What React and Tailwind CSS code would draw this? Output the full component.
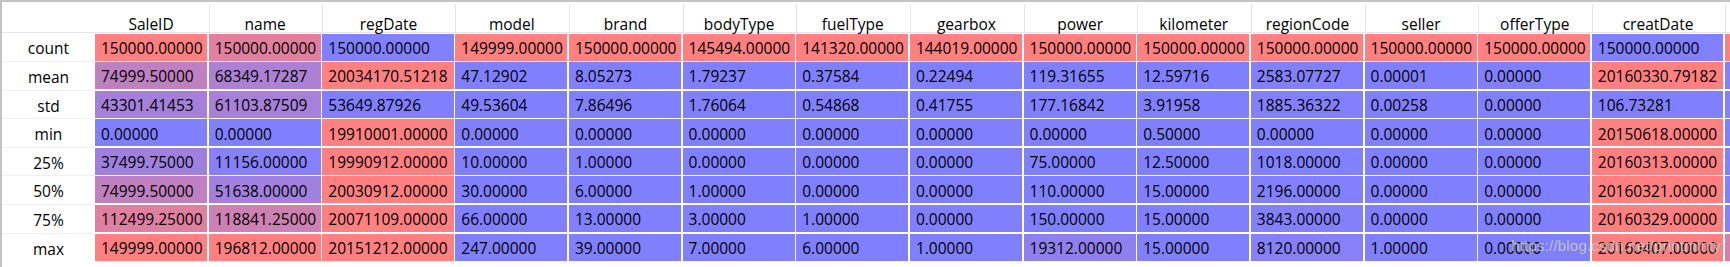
import React from 'react';

const columns = [
  'SaleID', 'name', 'regDate', 'model', 'brand', 'bodyType', 'fuelType', 'gearbox',
  'power', 'kilometer', 'regionCode', 'seller', 'offerType', 'creatDate', 'price',
];

const wide = ['regDate', 'creatDate', 'price'];

const stats = [
  ['count', [150000, 150000, 150000, 149999, 150000, 145494, 141320, 144019, 150000, 150000, 150000, 150000, 150000, 150000, 150000]],
  ['mean', [74999.5, 68349.17287, 20034170.51218, 47.12902, 8.05273, 1.79237, 0.37584, 0.22494, 119.31655, 12.59716, 2583.07727, 0.00001, 0, 20160330.79182, 5923.32733]],
  ['std', [43301.41453, 61103.87509, 53649.87926, 49.53604, 7.86496, 1.76064, 0.54868, 0.41755, 177.16842, 3.91958, 1885.36322, 0.00258, 0, 106.73281, 7501.99847]],
  ['min', [0, 0, 19910001, 0, 0, 0, 0, 0, 0, 0.5, 0, 0, 0, 20150618, 11]],
  ['25%', [37499.75, 11156, 19990912, 10, 1, 0, 0, 0, 75, 12.5, 1018, 0, 0, 20160313, 1300]],
  ['50%', [74999.5, 51638, 20030912, 30, 6, 1, 0, 0, 110, 15, 2196, 0, 0, 20160321, 3250]],
  ['75%', [112499.25, 118841.25, 20071109, 66, 13, 3, 1, 0, 150, 15, 3843, 0, 0, 20160329, 7700]],
  ['max', [149999, 196812, 20151212, 247, 39, 7, 6, 1, 19312, 15, 8120, 1, 0, 20160407, 99999]],
];

// per-column gradient from blue (low) to red (high)
const cellColor = (col, value) => {
  const vals = stats.map((s) => s[1][col]);
  const lo = Math.min(...vals);
  const hi = Math.max(...vals);
  const t = hi === lo ? 0 : (value - lo) / (hi - lo);
  const r = Math.round(128 + 127 * t);
  const b = Math.round(255 - 127 * t);
  return `rgb(${r},128,${b})`;
};

function Cell({ name, children, className, style }) {
  const w = wide.includes(name) ? 'w-[131.4px]' : 'w-[112.1px]';
  return (
    <div className={`${w} shrink-0 ${className}`} style={style}>
      {children}
    </div>
  );
}

export default function App() {
  return (
    <div
      className="relative w-[1730px] h-[267px] overflow-hidden bg-white border-t-2 border-l-2 border-[#c3c3c3] text-black"
      style={{ fontFamily: '"Open Sans", "Noto Sans", sans-serif' }}
    >
      {/* header */}
      <div className="flex h-[31px] border-b border-[#e6e6e6]">
        <div className="w-[93px] shrink-0" />
        <div className="flex gap-[1.57px]">
          {columns.map((c, i) => (
            <Cell
              key={c}
              name={c}
              className={`h-[29px] mt-[2px] flex items-end justify-center text-[15.5px] leading-none ${i > 0 ? 'border-l border-[#e4e4e4]' : ''}`}
            >
              <span className="pb-[1px]">{c}</span>
            </Cell>
          ))}
        </div>
      </div>

      {/* body */}
      <div className="flex flex-col gap-[1.6px] pt-[0.5px]">
        {stats.map(([label, values], r) => (
          <div key={label} className="flex h-[27px]">
            <div
              className={`w-[93px] shrink-0 flex items-center justify-center text-[15.5px] pt-[3px] ${r > 0 ? 'border-t border-[#f0f0f0] -mt-[1px] h-[29px]' : ''}`}
            >
              {label}
            </div>
            <div className="flex gap-[1.57px]">
              {values.map((v, i) => (
                <Cell
                  key={columns[i]}
                  name={columns[i]}
                  className="h-[27px] flex items-center pl-[6px] pt-[3px] text-[15.5px] whitespace-nowrap overflow-hidden"
                  style={{ backgroundColor: cellColor(i, v) }}
                >
                  {v.toFixed(5)}
                </Cell>
              ))}
            </div>
          </div>
        ))}
      </div>

      <div
        className="absolute right-[9px] bottom-[10px] text-[15px] text-white/60 tracking-[0.2px]"
        style={{ fontFamily: '"Liberation Sans", Arial, sans-serif', textShadow: '0 0 1px rgba(90,90,90,0.6)' }}
      >
        https://blog.csdn.net/printminty
      </div>
    </div>
  );
}
